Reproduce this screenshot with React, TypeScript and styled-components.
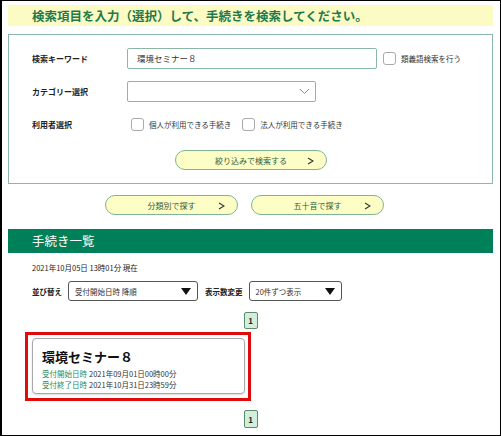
import styled, { createGlobalStyle } from "styled-components";

const GlobalStyle = createGlobalStyle`
  html, body {
    margin: 0;
    padding: 0;
    background: #fff;
  }
  body {
    font-family: "Noto Sans CJK JP", "Noto Sans", sans-serif;
    color: #222;
  }
`;

const Chevron = () => (
  <svg width="11" height="7" viewBox="0 0 11 7">
    <path d="M1 1l4.5 4.5L10 1" fill="none" stroke="#7a9a90" strokeWidth="1" />
  </svg>
);

const Triangle = () => (
  <svg width="10" height="7" viewBox="0 0 10 7">
    <path d="M0 0h10L5 7z" fill="#111" />
  </svg>
);

const Arrow = () => (
  <svg width="7" height="8" viewBox="0 0 7 8">
    <path d="M1 1l5 3-5 3" fill="none" stroke="#333" strokeWidth="1.1" />
  </svg>
);

const App = () => {
  return (
    <Frame>
      <GlobalStyle />
      <Lead>検索項目を入力（選択）して、手続きを検索してください。</Lead>
      <Panel>
        <Row>
          <Label>検索キーワード</Label>
          <TextInput>環境セミナー８</TextInput>
          <Check />
          <CheckText>類義語検索を行う</CheckText>
        </Row>
        <Row>
          <Label>カテゴリー選択</Label>
          <CategorySelect>
            <Chevron />
          </CategorySelect>
        </Row>
        <Row>
          <Label>利用者選択</Label>
          <Check $ml={4} />
          <CheckText>個人が利用できる手続き</CheckText>
          <Check $ml={11} />
          <CheckText>法人が利用できる手続き</CheckText>
        </Row>
        <ButtonRow>
          <PillButton $width={152}>
            <span>絞り込みで検索する</span>
            <Arrow />
          </PillButton>
        </ButtonRow>
      </Panel>
      <FindRow>
        <PillButton $width={133}>
          <span>分類別で探す</span>
          <Arrow />
        </PillButton>
        <PillButton $width={133}>
          <span>五十音で探す</span>
          <Arrow />
        </PillButton>
      </FindRow>
      <ListHeader>手続き一覧</ListHeader>
      <Stamp>2021年10月05日 13時01分 現在</Stamp>
      <SortRow>
        <SortLabel>並び替え</SortLabel>
        <DropDown $width={130}>
          <span>受付開始日時 降順</span>
          <Triangle />
        </DropDown>
        <SortLabel $ml={7}>表示数変更</SortLabel>
        <DropDown $width={93}>
          <span>20件ずつ表示</span>
          <Triangle />
        </DropDown>
      </SortRow>
      <Pager>
        <PageBox>1</PageBox>
      </Pager>
      <Highlight>
        <Card>
          <CardTitle>環境セミナー８</CardTitle>
          <CardLine>
            <em>受付開始日時</em>
            <span>2021年09月01日00時00分</span>
          </CardLine>
          <CardLine>
            <em>受付終了日時</em>
            <span>2021年10月31日23時59分</span>
          </CardLine>
        </Card>
      </Highlight>
      <Pager $mt={9}>
        <PageBox $h={18}>1</PageBox>
      </Pager>
    </Frame>
  );
};

const Frame = styled.div`
  width: 501px;
  height: 436px;
  box-sizing: border-box;
  border: 1px solid #000;
  border-left-width: 2px;
  padding: 4px 7px 0 6px;
  overflow: hidden;
`;

const Lead = styled.div`
  height: 21px;
  line-height: 21px;
  background: #fdfbc4;
  padding-left: 24px;
  font-size: 12.5px;
  font-weight: 700;
  color: #23794c;
  white-space: nowrap;
`;

const Panel = styled.div`
  margin-top: 8px;
  height: 150px;
  box-sizing: border-box;
  border: 1px solid #8bb8a6;
  padding: 13px 0 0 23px;
  display: flex;
  flex-direction: column;
  gap: 12px;
`;

const Row = styled.div`
  display: flex;
  align-items: center;
  height: 21px;
`;

const Label = styled.div`
  width: 95px;
  flex: none;
  font-size: 8px;
  font-weight: 700;
  color: #222;
`;

const TextInput = styled.div`
  width: 250px;
  height: 21px;
  box-sizing: border-box;
  border: 1px solid #8bb8a6;
  border-radius: 2px;
  padding-left: 9px;
  font-size: 8.5px;
  line-height: 19px;
  color: #333;
`;

const CategorySelect = styled.div`
  width: 189px;
  height: 21px;
  box-sizing: border-box;
  border: 1px solid #8bb8a6;
  border-radius: 2px;
  display: flex;
  align-items: center;
  justify-content: flex-end;
  padding-right: 5px;
`;

const Check = styled.div<{ $ml?: number }>`
  width: 13px;
  height: 13px;
  flex: none;
  box-sizing: border-box;
  border: 1px solid #aaa;
  border-radius: 3px;
  margin-left: ${({ $ml }) => ($ml ?? 6)}px;
`;

const CheckText = styled.span`
  margin-left: 5px;
  font-size: 7.5px;
  color: #333;
  white-space: nowrap;
`;

const ButtonRow = styled.div`
  display: flex;
  justify-content: center;
  margin-top: 3px;
  padding-right: 22px;
`;

const PillButton = styled.div<{ $width: number }>`
  width: ${({ $width }) => $width}px;
  height: 20px;
  box-sizing: border-box;
  background: #fdfdc6;
  border: 1px solid #7fb594;
  border-radius: 10px;
  display: flex;
  align-items: center;
  justify-content: center;
  position: relative;
  font-size: 8px;
  color: #2b5e3f;

  svg {
    position: absolute;
    right: 12px;
    top: 6px;
  }
`;

const FindRow = styled.div`
  display: flex;
  justify-content: center;
  gap: 13px;
  margin-top: 11px;
  padding-right: 12px;
`;

const ListHeader = styled.div`
  margin-top: 14px;
  height: 24px;
  line-height: 24px;
  background: #008058;
  color: #fff;
  font-size: 12.5px;
  padding-left: 24px;
`;

const Stamp = styled.div`
  margin-top: 9px;
  padding-left: 24px;
  font-size: 7.5px;
  color: #222;
`;

const SortRow = styled.div`
  margin-top: 8px;
  padding-left: 24px;
  display: flex;
  align-items: center;
`;

const SortLabel = styled.span<{ $ml?: number }>`
  font-size: 7.5px;
  font-weight: 700;
  margin-left: ${({ $ml }) => $ml ?? 0}px;
  margin-right: 6px;
`;

const DropDown = styled.div<{ $width: number }>`
  width: ${({ $width }) => $width}px;
  height: 20px;
  box-sizing: border-box;
  border: 1px solid #555;
  border-radius: 3px;
  display: flex;
  align-items: center;
  justify-content: space-between;
  padding: 0 6px 0 6px;
  font-size: 7.5px;
  color: #333;
`;

const Pager = styled.div<{ $mt?: number }>`
  display: flex;
  justify-content: center;
  margin-top: ${({ $mt }) => $mt ?? 11}px;
`;

const PageBox = styled.div<{ $h?: number }>`
  width: 14px;
  height: ${({ $h }) => $h ?? 17}px;
  box-sizing: border-box;
  background: #d3eedb;
  border: 1px solid #5c8c6c;
  border-radius: 2px;
  display: flex;
  align-items: center;
  justify-content: center;
  font-size: 8px;
  font-weight: 700;
  color: #222;
`;

const Highlight = styled.div`
  margin: 3px 0 0 17px;
  width: 226px;
  height: 69px;
  box-sizing: border-box;
  border: 3px solid #e00b0b;
  padding: 3px 3px 0 4px;
`;

const Card = styled.div`
  height: 56px;
  box-sizing: border-box;
  border: 1px solid #a8a8a8;
  border-radius: 4px;
  box-shadow: 0 1px 2px rgba(0, 0, 0, 0.15);
  padding: 9px 0 0 9px;
`;

const CardTitle = styled.div`
  font-size: 13px;
  font-weight: 700;
  color: #111;
  line-height: 18px;
  margin-bottom: 2px;
`;

const CardLine = styled.div`
  display: flex;
  font-size: 7.5px;
  line-height: 11px;
  white-space: nowrap;

  em {
    font-style: normal;
    color: #2a8a5c;
    width: 47px;
    flex: none;
  }
  span {
    color: #333;
  }
`;

export default App;
